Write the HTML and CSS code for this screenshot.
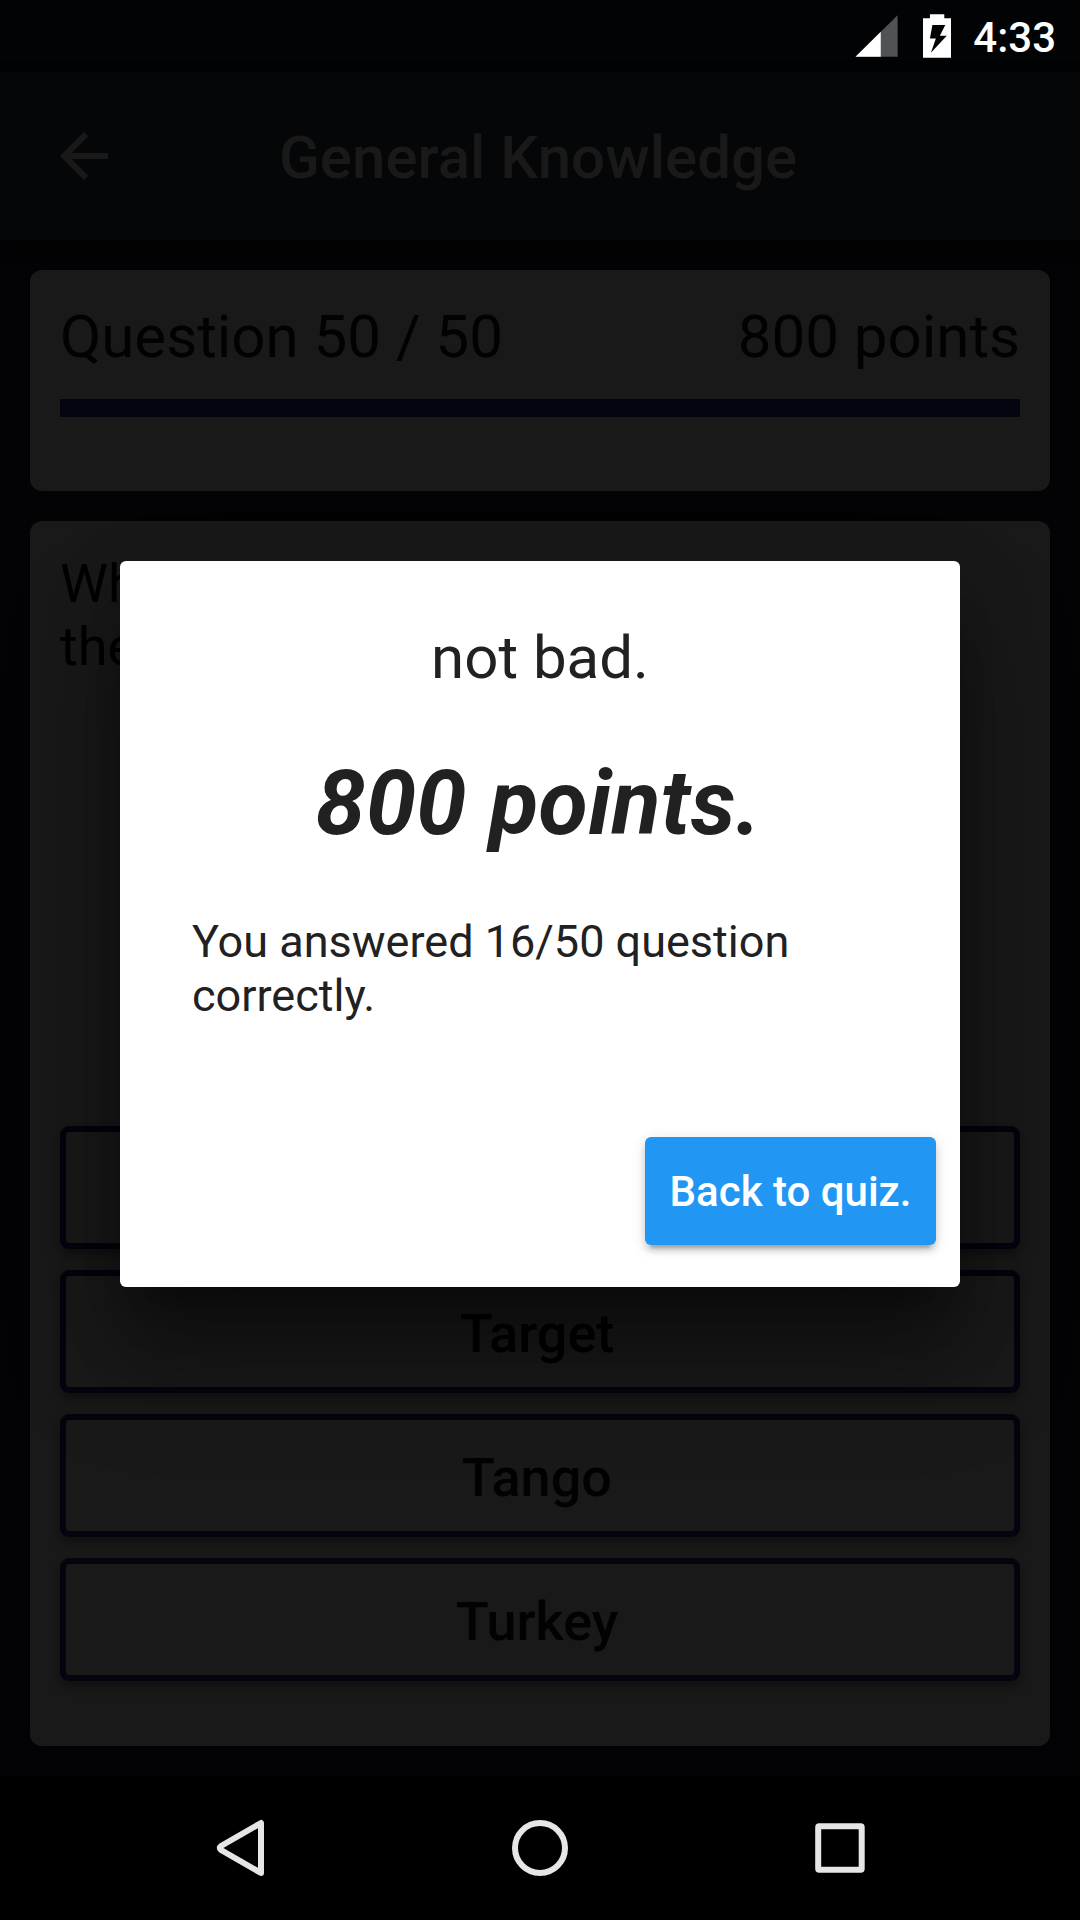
FILE: index.html
```html
<!DOCTYPE html>
<html lang="en">
<head>
<meta charset="utf-8">
<title>General Knowledge</title>
<link rel="stylesheet" href="styles.css">
</head>
<body>
<div class="screen">
  <header class="status">
    <svg class="signal" viewBox="0 0 44 44"><path class="dim" d="M43 1V43H0.500z"/><path class="lit" d="M26 17.700V43H0.500z"/></svg>
    <svg class="battery" viewBox="0 0 30 44"><path class="lit" fill-rule="evenodd" d="M8 0H22.500V4H29.500V44H1V4H8zM10.500 11L8 24.500H14L9 39L25 21.700H18L23.500 11z"/></svg>
    <time class="clock">4:33</time>
  </header>
  <nav class="appbar">
    <svg class="back" viewBox="0 0 24 24"><path d="M20 11H7.830l5.590-5.590L12 4l-8 8 8 8 1.410-1.410L7.830 13H20v-2z"/></svg>
    <h1 class="title">General Knowledge</h1>
  </nav>
  <main class="content">
    <section class="card progress">
      <div class="progress-row"><span>Question 50 / 50</span><span>800 points</span></div>
      <div class="bar"></div>
    </section>
    <section class="card quiz">
      <p class="question">Wh<br>the</p>
      <div class="answers">
        <button class="answer"></button>
        <button class="answer">Target</button>
        <button class="answer">Tango</button>
        <button class="answer">Turkey</button>
      </div>
    </section>
  </main>
  <footer class="navbar">
    <svg class="navicon" viewBox="0 0 60 60"><path d="M51 5V55L11 32Q8.500 30 11 28z"/></svg>
    <svg class="navicon" viewBox="0 0 60 60"><circle cx="30" cy="30" r="25"/></svg>
    <svg class="navicon" viewBox="0 0 60 60"><rect x="8.200" y="8.200" width="43.500" height="43.500" rx="1"/></svg>
  </footer>
  <div class="overlay">
    <div class="dialog" role="dialog">
      <h2 class="verdict">not bad.</h2>
      <p class="score">800 points.</p>
      <p class="summary">You answered 16/50 question correctly.</p>
      <button class="action">Back to quiz.</button>
    </div>
  </div>
</div>
</body>
</html>
```

FILE: styles.css
```css
* { box-sizing: border-box; margin: 0; padding: 0; }
body { background: #000; font-family: Roboto, sans-serif; }
button { font-family: inherit; }

.screen {
  position: relative;
  display: flex;
  flex-direction: column;
  width: 1080px;
  height: 1920px;
  overflow: hidden;
  background: #030305;
}

.status {
  display: flex;
  align-items: flex-start;
  height: 72px;
  padding: 14px 24px 0 855px;
  background: #020304;
}
.signal { width: 44px; height: 44px; }
.battery { width: 30px; height: 44px; margin-left: 23px; }
.lit { fill: #fff; }
.dim { fill: #515253; }
.clock {
  margin-left: 22px;
  color: #fff;
  font-size: 42px;
  font-weight: 500;
  line-height: 48px;
  white-space: nowrap;
}

.appbar {
  display: flex;
  align-items: center;
  height: 168px;
  padding-left: 48px;
  background: #040607;
  box-shadow: 0 6px 12px rgba(0, 0, 0, .5);
}
.back { width: 72px; height: 72px; fill: #191919; }
.title {
  margin: 4px 0 0 159px;
  color: #191919;
  font-size: 60px;
  font-weight: 500;
  line-height: 70px;
}

.content {
  flex: 1;
  display: flex;
  flex-direction: column;
  gap: 30px;
  padding: 30px;
}
.card { border-radius: 12px; background: #191919; color: #020202; }
.progress { height: 221px; padding: 32px 30px 30px; }
.progress-row {
  display: flex;
  justify-content: space-between;
  font-size: 60px;
  line-height: 70px;
}
.bar { height: 18px; margin-top: 27px; background: #04040e; }
.quiz {
  flex: 1;
  display: flex;
  flex-direction: column;
  justify-content: space-between;
  padding: 31px 30px 65px;
}
.question { font-size: 54px; line-height: 63px; }
.answers { display: flex; flex-direction: column; gap: 21px; }
.answer {
  height: 123px;
  padding: 4px 6px 0 0;
  border: 6px solid #04040e;
  border-radius: 9px;
  background: #191919;
  box-shadow: 0 6px 9px rgba(0, 0, 0, .35);
  color: #020202;
  font-size: 54px;
  font-weight: 500;
  line-height: 64px;
}

.navbar {
  display: flex;
  justify-content: center;
  align-items: center;
  gap: 240px;
  height: 144px;
  background: #000;
}
.navicon {
  width: 60px;
  height: 60px;
  fill: none;
  stroke: #e6e6e6;
  stroke-width: 6;
  stroke-linejoin: round;
}

.overlay {
  position: absolute;
  inset: 72px 0 144px;
  display: flex;
  justify-content: center;
  align-items: center;
}
.dialog {
  display: flex;
  flex-direction: column;
  width: 840px;
  height: 726px;
  padding: 62px 24px 42px;
  border-radius: 6px;
  background: #fff;
  color: #212121;
  box-shadow:
    0 33px 45px -21px rgba(0, 0, 0, .4),
    0 72px 110px rgba(0, 0, 0, .36),
    0 27px 80px rgba(0, 0, 0, .15);
}
.verdict { font-size: 60px; font-weight: 400; line-height: 70px; text-align: center; }
.score {
  margin-top: 58px;
  padding-right: 3px;
  font-size: 90px;
  font-weight: 700;
  font-style: italic;
  letter-spacing: .3px;
  line-height: 106px;
  text-align: center;
}
.summary { margin: 58px 48px 0; font-size: 45px; line-height: 54px; }
.action {
  align-self: flex-end;
  width: 291px;
  height: 108px;
  margin-top: auto;
  border: 0;
  border-radius: 6px;
  background: #2196f3;
  color: #fff;
  font-size: 42px;
  font-weight: 500;
  white-space: nowrap;
  box-shadow:
    0 9px 3px -6px rgba(0, 0, 0, .2),
    0 6px 6px rgba(0, 0, 0, .14),
    0 3px 15px rgba(0, 0, 0, .12);
}
```
